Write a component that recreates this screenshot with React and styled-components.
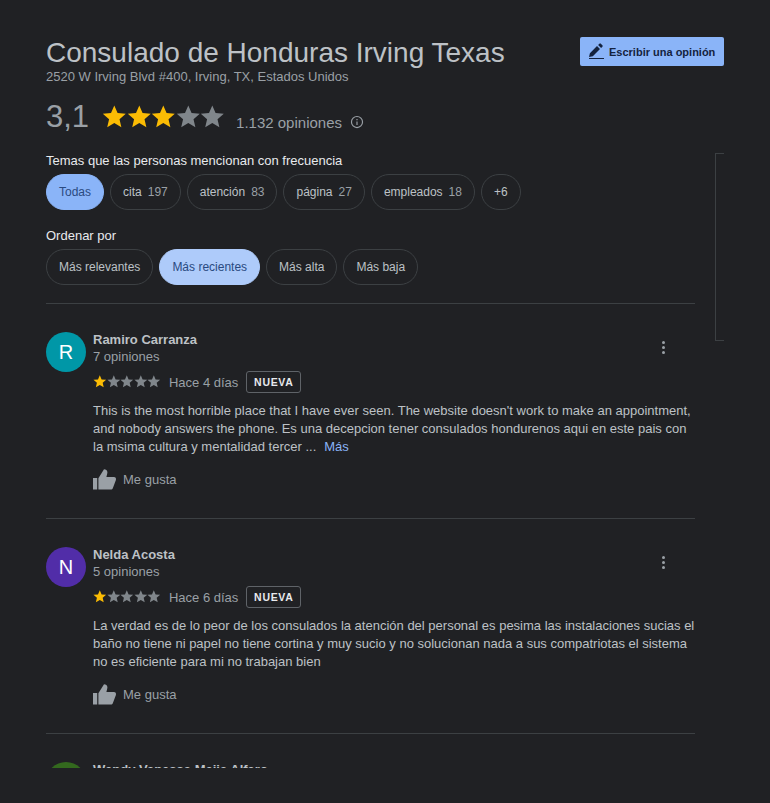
import React from "react";
import styled, { createGlobalStyle } from "styled-components";

const Global = createGlobalStyle`
  html, body { margin: 0; padding: 0; background: #202124; }
  body { font-family: "Liberation Sans", Arial, sans-serif; }
`;

const Page = styled.div`
  position: relative;
  width: 770px;
  height: 803px;
  box-sizing: border-box;
  padding: 37px 46px 0;
  background: #202124;
  overflow: hidden;
`;

const Header = styled.div`
  display: flex;
  justify-content: space-between;
  align-items: flex-start;
  width: 678px;
`;

const Title = styled.h1`
  margin: 0;
  font-size: 28px;
  line-height: 32px;
  font-weight: 400;
  color: #bdc1c6;
`;

const Address = styled.div`
  font-size: 13px;
  line-height: 15px;
  color: #9aa0a6;
`;

const WriteButton = styled.button`
  display: flex;
  align-items: center;
  gap: 4px;
  width: 144px;
  height: 29px;
  padding: 0 0 0 8px;
  box-sizing: border-box;
  border: 0;
  border-radius: 2px;
  background: #8ab4f8;
  color: #14233f;
  font: 700 11px "Liberation Sans", Arial, sans-serif;
`;

const RatingRow = styled.div`
  display: flex;
  align-items: center;
  margin-top: 14px;
  height: 38px;
`;

const Score = styled.span`
  font-size: 31px;
  color: #9aa0a6;
  margin-right: 13px;
`;

const Stars = styled.span`
  display: inline-flex;
`;

const Count = styled.span`
  font-size: 15px;
  color: #9aa0a6;
  margin-left: 11px;
  margin-top: 10px;
`;

const InfoWrap = styled.span`
  display: inline-flex;
  margin-left: 8px;
  margin-top: 10px;
`;

const Label = styled.div`
  font-size: 13px;
  line-height: 16px;
  color: #e8eaed;
  margin-top: ${(p) => p.$top}px;
`;

const Chips = styled.div`
  display: flex;
  gap: 6px;
  margin-top: 5px;
`;

const Chip = styled.div`
  display: flex;
  align-items: center;
  gap: 6px;
  height: 36px;
  padding: 0 12px;
  box-sizing: border-box;
  border-radius: 18px;
  font-size: 12px;
  border: 1px solid ${(p) => (p.$bg ? p.$bg : "#3c4043")};
  background: ${(p) => p.$bg || "transparent"};
  color: ${(p) => (p.$bg ? "#2a4a80" : "#bdc1c6")};
`;

const ChipCount = styled.span`
  color: #9aa0a6;
`;

const Reviews = styled.div`
  margin-top: 18px;
  width: 649px;
  height: 465px;
  overflow: hidden;
`;

const Review = styled.div`
  display: flex;
  gap: 7px;
  height: 214px;
  box-sizing: border-box;
  border-top: 1px solid #3c4043;
  padding-top: 28px;
  margin-bottom: 1px;
`;

const Avatar = styled.div`
  flex: none;
  width: 40px;
  height: 40px;
  border-radius: 50%;
  background: ${(p) => p.$color};
  color: #fff;
  font-size: 20px;
  display: flex;
  align-items: center;
  justify-content: center;
`;

const Body = styled.div`
  flex: 1;
  min-width: 0;
`;

const Top = styled.div`
  display: flex;
  justify-content: space-between;
`;

const Name = styled.div`
  font-size: 13px;
  line-height: 16px;
  font-weight: 700;
  color: #bdc1c6;
`;

const Sub = styled.div`
  font-size: 13px;
  line-height: 18px;
  color: #9aa0a6;
`;

const More = styled.div`
  display: flex;
  flex-direction: column;
  gap: 2px;
  margin: 9px 30px 0 0;
`;

const Dot = styled.i`
  width: 3px;
  height: 3px;
  border-radius: 50%;
  background: #9aa0a6;
`;

const Meta = styled.div`
  display: flex;
  align-items: center;
  margin-top: 5px;
  height: 22px;
`;

const When = styled.span`
  font-size: 13px;
  color: #9aa0a6;
  margin-left: 8px;
`;

const Badge = styled.span`
  margin-left: 8px;
  height: 22px;
  width: 55px;
  box-sizing: border-box;
  display: flex;
  align-items: center;
  justify-content: center;
  border: 1px solid #5f6368;
  border-radius: 3px;
  font-size: 10.5px;
  font-weight: 700;
  letter-spacing: 0.7px;
  color: #e8eaed;
`;

const Text = styled.div`
  margin-top: 9px;
  font-size: 13px;
  line-height: 18px;
  color: #bdc1c6;
  white-space: pre-line;
`;

const Link = styled.span`
  color: #8ab4f8;
  margin-left: 8px;
`;

const Like = styled.div`
  display: flex;
  align-items: center;
  gap: 7px;
  margin-top: 13px;
  font-size: 13px;
  color: #9aa0a6;
`;

const Scrollbar = styled.div`
  position: absolute;
  left: 715px;
  top: 153px;
  width: 9px;
  height: 188px;
  box-sizing: border-box;
  border: 1px solid #3c4043;
  border-right: 0;
`;

const Star = ({ on, size }) => (
  <svg width={size} height={size} viewBox="0 0 24 24">
    <path
      fill={on ? "#fbbc04" : "#80868b"}
      d="M12 17.6l-6.9 4.2 1.8-7.9L.8 8.6l8-.7L12 .5l3.2 7.4 8 .7-6.1 5.3 1.8 7.9z"
    />
  </svg>
);

const StarRow = ({ value, size }) => (
  <Stars>
    {[1, 2, 3, 4, 5].map((n) => (
      <Star key={n} on={n <= value} size={size} />
    ))}
  </Stars>
);

const Pencil = () => (
  <svg width="17" height="17" viewBox="0 0 17 17">
    <path fill="#14233f" d="M1 14l.9-3.8L9 3.1l3 3-7.2 7.1zM10.1 2l1.3-1.3a1 1 0 0 1 1.4 0l1.6 1.6a1 1 0 0 1 0 1.4L13.1 5z" />
    <rect x="1" y="15" width="15" height="1" fill="#14233f" />
  </svg>
);

const Info = () => (
  <svg width="14" height="14" viewBox="0 0 24 24" fill="none" stroke="#9aa0a6" strokeWidth="2">
    <circle cx="12" cy="12" r="9.5" />
    <path d="M12 11v6M12 7v2" />
  </svg>
);

const Thumb = () => (
  <svg width="23" height="21" viewBox="0 0 23 21">
    <path fill="#9aa0a6" d="M0 9h4.2v11.5H0zM5.4 20.5V9.2L11 .3c1.8 0 3.4 1 3.4 2.9 0 1.3-.6 3.2-1 4.8H21c1.2 0 2 .9 2 2l-.1 1-3 7.9c-.4.9-1.1 1.6-2 1.6z" />
  </svg>
);

const reviews = [
  {
    name: "Ramiro Carranza", initial: "R", color: "#0097a7", count: "7 opiniones", when: "Hace 4 días",
    text: "This is the most horrible place that I have ever seen. The website doesn't work to make an appointment,\nand nobody answers the phone. Es una decepcion tener consulados hondurenos aqui en este pais con\nla msima cultura y mentalidad tercer ...",
    more: true,
  },
  {
    name: "Nelda Acosta", initial: "N", color: "#512da8", count: "5 opiniones", when: "Hace 6 días",
    text: "La verdad es de lo peor de los consulados la atención del personal es pesima las instalaciones sucias el\nbaño no tiene ni papel no tiene cortina y muy sucio y no solucionan nada a sus compatriotas el sistema\nno es eficiente para mi no trabajan bien",
  },
  { name: "Wendy Vanessa Mejia Alfaro", initial: "W", color: "#33691e", count: "", when: "" },
];

export default function App() {
  return (
    <Page>
      <Global />
      <Header>
        <div>
          <Title>Consulado de Honduras Irving Texas</Title>
          <Address>2520 W Irving Blvd #400, Irving, TX, Estados Unidos</Address>
        </div>
        <WriteButton><Pencil />Escribir una opinión</WriteButton>
      </Header>
      <RatingRow>
        <Score>3,1</Score>
        <StarRow value={3} size={24.6} />
        <Count>1.132 opiniones</Count>
        <InfoWrap><Info /></InfoWrap>
      </RatingRow>
      <Label $top={17}>Temas que las personas mencionan con frecuencia</Label>
      <Chips>
        <Chip $bg="#8ab4f8">Todas</Chip>
        <Chip>cita <ChipCount>197</ChipCount></Chip>
        <Chip>atención <ChipCount>83</ChipCount></Chip>
        <Chip>página <ChipCount>27</ChipCount></Chip>
        <Chip>empleados <ChipCount>18</ChipCount></Chip>
        <Chip>+6</Chip>
      </Chips>
      <Label $top={18}>Ordenar por</Label>
      <Chips>
        <Chip>Más relevantes</Chip>
        <Chip $bg="#aecbfa">Más recientes</Chip>
        <Chip>Más alta</Chip>
        <Chip>Más baja</Chip>
      </Chips>
      <Reviews>
        {reviews.map((r) => (
          <Review key={r.name}>
            <Avatar $color={r.color}>{r.initial}</Avatar>
            <Body>
              <Top>
                <div>
                  <Name>{r.name}</Name>
                  <Sub>{r.count}</Sub>
                </div>
                <More><Dot /><Dot /><Dot /></More>
              </Top>
              <Meta>
                <StarRow value={1} size={13.6} />
                <When>{r.when}</When>
                <Badge>NUEVA</Badge>
              </Meta>
              <Text>{r.text}{r.more && <Link>Más</Link>}</Text>
              <Like><Thumb />Me gusta</Like>
            </Body>
          </Review>
        ))}
      </Reviews>
      <Scrollbar />
    </Page>
  );
}
